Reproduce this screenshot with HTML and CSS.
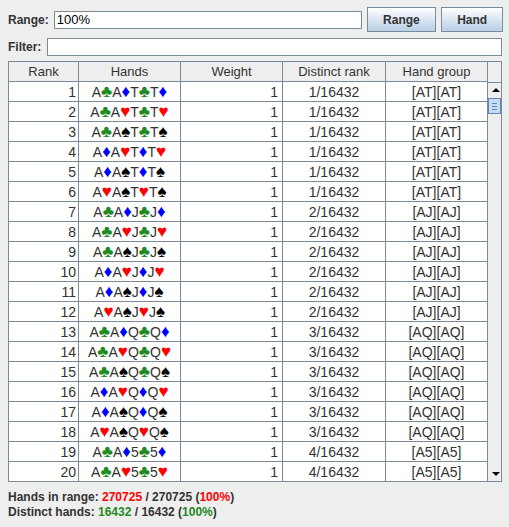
FILE: index.html
```html
<!DOCTYPE html>
<html lang="en">
<head>
    <meta charset="UTF-8">
    <title>Range Viewer</title>
    <link rel="stylesheet" href="styles.css">
</head>
<body>
    <div class="range-row">
        <span class="label">Range:</span>
        <div class="field range-field">100%</div>
        <button class="btn btn-range">Range</button>
        <button class="btn btn-hand">Hand</button>
    </div>
    <div class="filter-row">
        <span class="label">Filter:</span>
        <div class="field filter-field"></div>
    </div>

    <div class="table-pane">
        <table class="hands-table">
            <thead>
                <tr>
                    <th class="col-rank">Rank</th>
                    <th class="col-hands">Hands</th>
                    <th class="col-weight">Weight</th>
                    <th class="col-distinct">Distinct rank</th>
                    <th class="col-group">Hand group</th>
                </tr>
            </thead>
            <tbody id="rows"></tbody>
        </table>
        <div class="scrollbar">
            <div class="sb-corner"></div>
            <div class="sb-arrow up"></div>
            <div class="sb-thumb"><i></i><i></i><i></i></div>
            <div class="sb-track"></div>
            <div class="sb-arrow down"></div>
        </div>
    </div>

    <div class="summary">
        <div>Hands in range: <span class="red">270725</span> / 270725 (<span class="red">100%</span>)</div>
        <div>Distinct hands: <span class="green">16432</span> / 16432 (<span class="green">100%</span>)</div>
    </div>

    <script>
        const suits = { c: "♣", d: "♦", h: "♥", s: "♠" };
        const pairs = [["c", "d"], ["c", "h"], ["c", "s"], ["d", "h"], ["d", "s"], ["h", "s"]];
        const kickers = ["T", "J", "Q", "5"];
        const tbody = document.getElementById("rows");
        let rank = 1;

        kickers.forEach((k, i) => {
            pairs.forEach(([a, b]) => {
                if (rank > 20) return;
                const card = (r, s) => r + '<span class="suit ' + s + '">' + suits[s] + '</span>';
                const hand = card("A", a) + card("A", b) + card(k, a) + card(k, b);
                const tr = document.createElement("tr");
                tr.innerHTML =
                    '<td class="col-rank">' + rank + '</td>' +
                    '<td class="col-hands">' + hand + '</td>' +
                    '<td class="col-weight">1</td>' +
                    '<td class="col-distinct">' + (i + 1) + '/16432</td>' +
                    '<td class="col-group">[A' + k + '][A' + k + ']</td>';
                tbody.appendChild(tr);
                rank++;
            });
        });
    </script>
</body>
</html>
```

FILE: styles.css
```css
body {
    margin: 0;
    background: #eeeeee;
    font-family: "Liberation Sans", Arial, sans-serif;
    color: #333333;
    width: 509px;
}
.label {
    font-weight: bold;
    font-size: 12px;
    color: #333333;
}
.field {
    box-sizing: border-box;
    background: #ffffff;
    border: 1px solid #7a8a99;
    height: 18px;
    font-size: 13px;
    line-height: 16px;
    padding-left: 2px;
    color: #000;
}
.range-row {
    display: flex;
    align-items: center;
    padding: 7px 6px 0 8px;
    height: 25px;
}
.range-row .label {
    width: 46px;
}
.range-field {
    width: 309px;
    margin-right: 5px;
}
.btn {
    box-sizing: border-box;
    height: 25px;
    border: 1px solid #7a8a99;
    background: linear-gradient(#ffffff, #dde8f3 45%, #b8cfe5);
    font-family: "Liberation Sans", Arial, sans-serif;
    font-weight: bold;
    font-size: 12px;
    color: #333333;
    padding: 0;
}
.btn-range {
    width: 70px;
    margin-right: 5px;
}
.btn-hand {
    width: 62px;
}
.filter-row {
    display: flex;
    align-items: center;
    padding: 6px 7px 0 8px;
    height: 18px;
}
.filter-row .label {
    width: 39px;
}
.filter-field {
    flex: 1;
}

.table-pane {
    display: flex;
    margin: 5px 7px 0 8px;
    border: 1px solid #7a8a99;
    height: 419px;
    background: #ffffff;
}
.hands-table {
    border-collapse: collapse;
    table-layout: fixed;
    width: 479px;
    font-size: 14px;
}
.hands-table th {
    height: 19px;
    padding: 0;
    background: #eeeeee;
    font-weight: normal;
    font-size: 13px;
    color: #333333;
    border-right: 1px solid #7a8a99;
    border-bottom: 1px solid #7a8a99;
    text-align: center;
}
.hands-table td {
    height: 19px;
    padding: 0;
    border-right: 1px solid #7a8a99;
    border-bottom: 1px solid #7a8a99;
    color: #333333;
    white-space: nowrap;
}
.hands-table tr:last-child td {
    border-bottom: none;
}
.col-rank { width: 69px; text-align: right; }
.col-hands { width: 101px; text-align: center; }
.col-weight { width: 101px; text-align: right; }
.col-distinct { width: 102px; text-align: center; }
.col-group { width: 101px; text-align: center; }
td.col-rank { padding-right: 2px !important; }
td.col-weight { padding-right: 4px !important; }
td.col-hands { font-size: 14px; }

.suit { font-size: 17px; line-height: 14px; }
.suit.c { color: #1f8a1f; }
.suit.d { color: #0000ff; }
.suit.h { color: #ff0000; }
.suit.s { color: #000000; }

.scrollbar {
    flex: 1;
    display: flex;
    flex-direction: column;
    background: #eeeeee;
}
.sb-corner {
    height: 20px;
    border-bottom: 1px solid #7a8a99;
    background: #eeeeee;
}
.sb-arrow {
    height: 15px;
    position: relative;
}
.sb-arrow::after {
    content: "";
    position: absolute;
    left: 4px;
    border-left: 4px solid transparent;
    border-right: 4px solid transparent;
}
.sb-arrow.up::after {
    top: 5px;
    border-bottom: 4px solid #000;
}
.sb-arrow.down::after {
    top: 6px;
    border-top: 4px solid #000;
}
.sb-thumb {
    box-sizing: border-box;
    height: 16px;
    border: 1px solid #6382bf;
    background: #c8ddf2;
    display: flex;
    flex-direction: column;
    justify-content: center;
    gap: 2px;
    padding: 0 3px;
}
.sb-thumb i {
    display: block;
    height: 1px;
    background: #6382bf;
}
.sb-track {
    flex: 1;
}

.summary {
    padding: 8px 0 0 8px;
    font-weight: bold;
    font-size: 12px;
    line-height: 15px;
    color: #333333;
}
.red { color: #ff0000; }
.green { color: #1f8a1f; }
```
